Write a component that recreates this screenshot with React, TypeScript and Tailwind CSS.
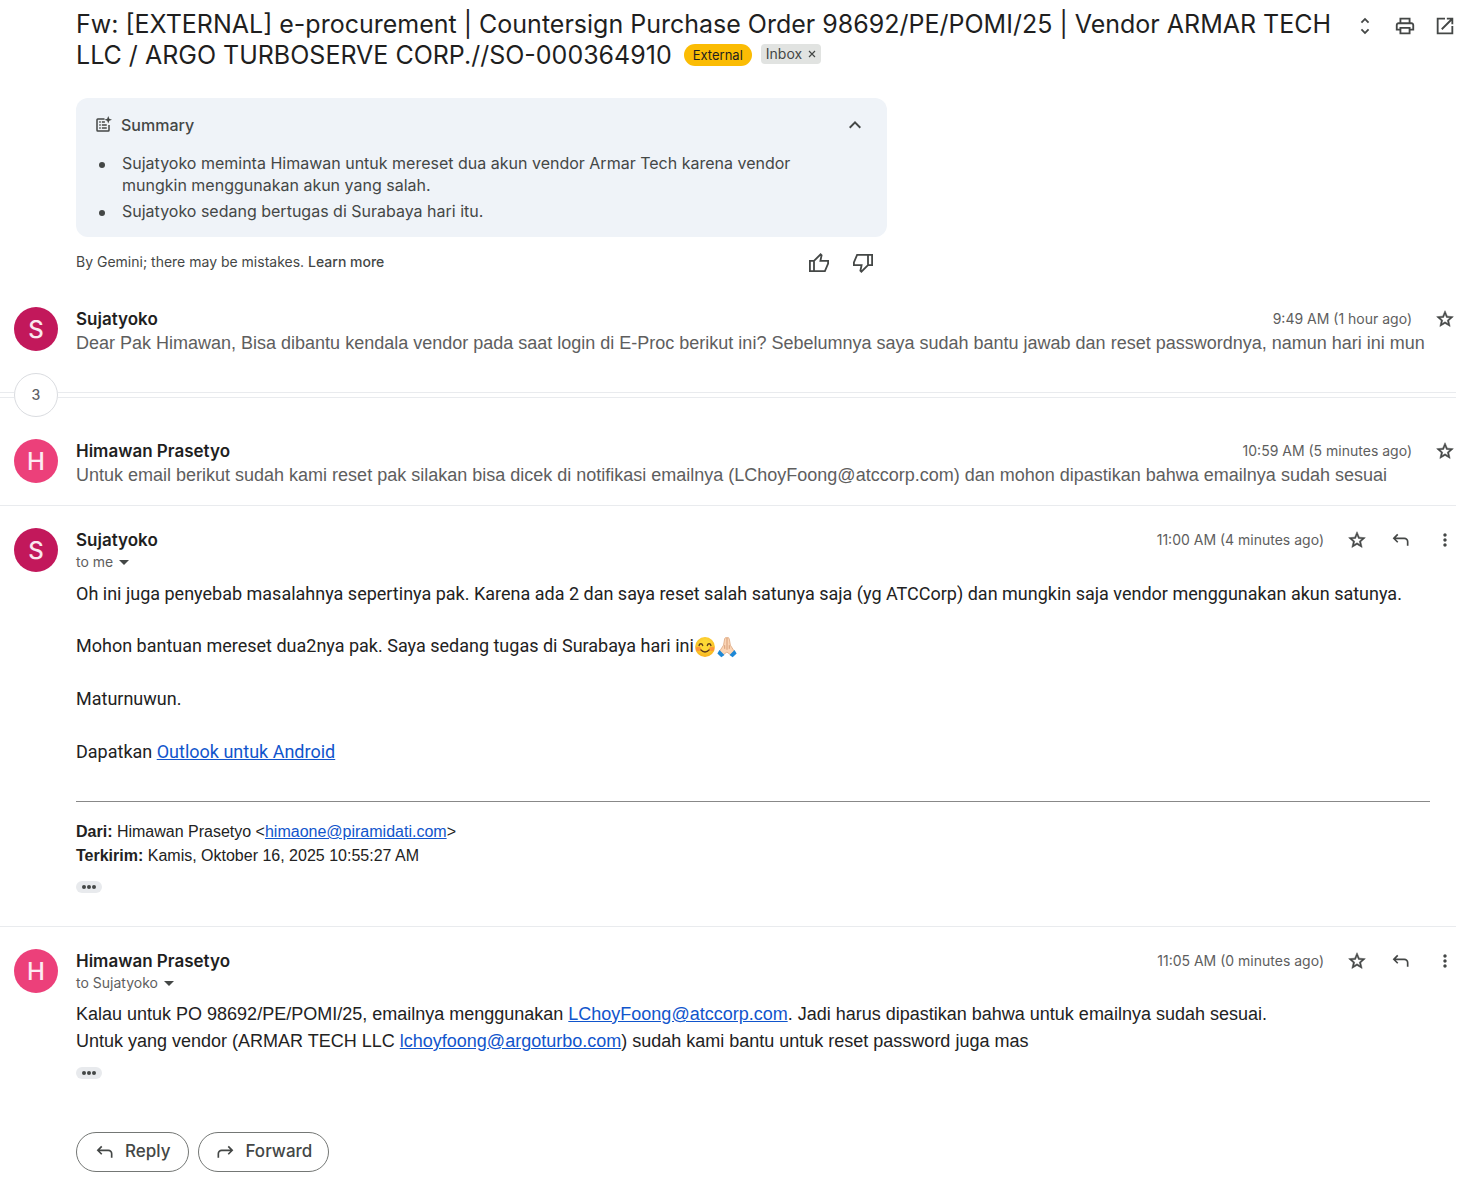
import type { ReactNode } from "react";

type IconProps = { d: string; className?: string };

function Icon({ d, className = "size-5" }: IconProps) {
  return (
    <svg viewBox="0 0 24 24" fill="currentColor" aria-hidden="true" className={"shrink-0 " + className}>
      <path d={d} />
    </svg>
  );
}

const paths = {
  unfold: "M12 5.83 15.17 9l1.41-1.41L12 3 7.41 7.59 8.83 9 12 5.83zm0 12.34L8.83 15l-1.41 1.41L12 21l4.59-4.59L15.17 15 12 18.17z",
  print:
    "M19 8h-1V3H6v5H5c-1.66 0-3 1.34-3 3v6h4v4h12v-4h4v-6c0-1.66-1.34-3-3-3zM8 5h8v3H8V5zm8 12v2H8v-4h8v2zm2-2v-2H6v2H4v-4c0-.55.45-1 1-1h14c.55 0 1 .45 1 1v4h-2z",
  openNew: "M19 19H5V5h7V3H3v18h18v-9h-2v7zM14 3v2h3.59l-9.83 9.83 1.41 1.41L19 6.41V10h2V3h-7z",
  up: "M12 8l-6 6 1.41 1.41L12 10.83l4.59 4.58L18 14z",
  star: "M22 9.24l-7.19-.62L12 2 9.19 8.63 2 9.24l5.46 4.73L5.82 21 12 17.27 18.18 21l-1.63-7.03L22 9.24zM12 15.4l-3.76 2.27 1-4.28-3.32-2.88 4.38-.38L12 6.1l1.71 4.04 4.38.38-3.32 2.88 1 4.28L12 15.4z",
  reply: "M7.4 4.6 8.8 6 5.8 9H16a5 5 0 0 1 5 5v5h-2v-5a3 3 0 0 0-3-3H5.8l3 3-1.4 1.4L2 10z",
  forward: "M16.6 4.6 15.2 6l3 3H8a5 5 0 0 0-5 5v5h2v-5a3 3 0 0 1 3-3h10.2l-3 3 1.4 1.4L22 10z",
  more: "M12 8c1.1 0 2-.9 2-2s-.9-2-2-2-2 .9-2 2 .9 2 2 2zm0 2c-1.1 0-2 .9-2 2s.9 2 2 2 2-.9 2-2-.9-2-2-2zm0 6c-1.1 0-2 .9-2 2s.9 2 2 2 2-.9 2-2-.9-2-2-2z",
  summary:
    "M5 3h9v2H5v14h14v-7h2v7a2 2 0 0 1-2 2H5a2 2 0 0 1-2-2V5a2 2 0 0 1 2-2zM7 7h2v2H7zM7 11h2v2H7zM7 15h2v2H7zM10.500 7h4v2h-4zM10.500 11h6.500v2h-6.500zM10.500 15h6.500v2h-6.500zM19 0l1.400 3.600L24 5l-3.600 1.400L19 10l-1.400-3.600L14 5l3.600-1.400z",
};

function ThumbIcon({ down = false }: { down?: boolean }) {
  return (
    <svg
      viewBox="0 0 24 24"
      fill="none"
      stroke="currentColor"
      strokeWidth="1.800"
      aria-hidden="true"
      className={down ? "size-6 rotate-180" : "size-6"}
    >
      <path d="M2.900 9.900H7v10.200H2.900zM7 9.900l6.600-6.600 1 1-1.200 5.600h7.700v2.600l-3.200 7.600H7" />
    </svg>
  );
}

function SmileEmoji() {
  return (
    <svg viewBox="0 0 24 24" role="img" aria-label="😊" className="inline-block size-[22px] align-[-6px]">
      <defs>
        <radialGradient id="face" cx="50%" cy="40%" r="60%">
          <stop offset="40%" stopColor="#fdd835" />
          <stop offset="100%" stopColor="#f9b41f" />
        </radialGradient>
      </defs>
      <circle cx="12" cy="12" r="10.800" fill="url(#face)" />
      <ellipse cx="4.800" cy="14" rx="3" ry="2.400" fill="#ff7043" opacity=".55" />
      <ellipse cx="19.200" cy="14" rx="3" ry="2.400" fill="#ff7043" opacity=".55" />
      <g fill="none" stroke="#5d3a1a" strokeWidth="1.500" strokeLinecap="round">
        <path d="M5.500 10.300c.7-2.400 3.300-2.400 4 0M14.500 10.300c.7-2.400 3.300-2.400 4 0M7.500 15.200c2.400 3 6.600 3 9 0" />
      </g>
    </svg>
  );
}

function PrayEmoji() {
  return (
    <svg viewBox="0 0 24 24" role="img" aria-label="🙏🏻" className="inline-block size-[22px] align-[-6px]">
      <path
        d="M11.900 2c-1.200-.8-2.300 0-2.500 1.300L8.200 10 4 16.500l3.600 4.300 4.300-3.300 4.300 3.300 3.600-4.300L15.700 10l-1.200-6.700C14.300 2 13.100 1.200 11.900 2z"
        fill="#fbd5b5"
        stroke="#d9a077"
        strokeWidth=".8"
      />
      <path d="M12 2v13M9.500 10v4M14.500 10v4" stroke="#c98b62" strokeWidth=".8" />
      <path d="M3.800 15.200 1.500 19l4.300 4.200 3.400-2.600zM20.200 15.200l2.300 3.800-4.300 4.200-3.400-2.600z" fill="#1e88d6" />
    </svg>
  );
}

function IconButton({ label, children }: { label: string; children: ReactNode }) {
  return (
    <button type="button" aria-label={label} className="flex h-6 w-[22px] shrink-0 items-center justify-center text-[#444746]">
      {children}
    </button>
  );
}

function Trimmed() {
  return (
    <button
      type="button"
      aria-label="Show trimmed content"
      className="flex h-3 w-[26px] items-center justify-center gap-px rounded-full bg-[#e8eaed]"
    >
      <i className="size-1 rounded-full bg-[#444746]" />
      <i className="size-1 rounded-full bg-[#444746]" />
      <i className="size-1 rounded-full bg-[#444746]" />
    </button>
  );
}

function MailLink({ children }: { children: ReactNode }) {
  return (
    <a href="#" className="text-[#1155cc] underline">
      {children}
    </a>
  );
}

type MessageProps = {
  name: string;
  initial: string;
  color: string;
  time: string;
  to?: string;
  snippet?: string;
  children?: ReactNode;
};

function Message({ name, initial, color, time, to, snippet, children }: MessageProps) {
  return (
    <article className="flex pt-[22px]">
      <div className="w-[76px] shrink-0 pl-3.5">
        <div className={"flex size-11 items-center justify-center rounded-full pt-0.5 text-2xl font-medium text-white/90 " + color}>
          {initial}
        </div>
      </div>
      <div className="min-w-0 flex-1">
        <header className="flex h-6 items-center">
          <h2 className="flex-1 text-[17px] leading-6 font-semibold text-[#1f1f1f]">{name}</h2>
          <time className="text-sm text-[#5e5e5e]">{time}</time>
          <div className="ml-[22px] flex gap-[22px]">
            <IconButton label="Star">
              <svg viewBox="0 0 24 24" fill="currentColor" stroke="currentColor" strokeWidth=".6" aria-hidden="true" className="size-5">
                <path d={paths.star} />
              </svg>
            </IconButton>
            {to && (
              <>
                <IconButton label="Reply">
                  <Icon d={paths.reply} />
                </IconButton>
                <IconButton label="More">
                  <Icon d={paths.more} />
                </IconButton>
              </>
            )}
          </div>
        </header>
        {to && (
          <button type="button" className="flex h-5 items-center gap-1.5 text-sm text-[#5e5e5e]">
            {to}
            <svg viewBox="0 0 10 5" aria-hidden="true" className="h-[5px] w-2.5 fill-[#444746]">
              <path d="M0 0h10L5 5z" />
            </svg>
          </button>
        )}
        {snippet && (
          <p className="overflow-hidden font-['Liberation_Sans',Arial,sans-serif] text-lg leading-6 whitespace-nowrap text-[#5e5e5e]">
            {snippet}
          </p>
        )}
        {children}
      </div>
    </article>
  );
}

export default function App() {
  return (
    <main className="bg-white pr-[13px] pb-2 font-[Inter,sans-serif] text-[#1f1f1f]">
      <header className="flex items-start pt-[9px] pl-[76px]">
        <h1 className="flex-1 text-[25px] leading-[31px]">
          Fw: [EXTERNAL] e-procurement | Countersign Purchase Order 98692/PE/POMI/25 | Vendor ARMAR TECH LLC / ARGO
          TURBOSERVE CORP.//SO-000364910
          <span className="ml-3 inline-flex h-[22px] items-center rounded-full bg-[#fbbc04] px-[9px] align-[4px] text-[13px] leading-5">
            External
          </span>
          <span className="ml-[9px] inline-flex h-5 items-center gap-1.5 rounded bg-[#e1e3e1] px-[5px] align-[5px] text-sm text-[#444746]">
            Inbox
            <button type="button" aria-label="Remove label Inbox">
              <svg viewBox="0 0 8 8" className="size-2 stroke-[#444746]" strokeWidth="1.200">
                <path d="M1 1l6 6M7 1L1 7" />
              </svg>
            </button>
          </span>
        </h1>
        <div className="flex gap-[18px] pt-[5px]">
          <IconButton label="Expand all">
            <Icon d={paths.unfold} className="h-6 w-[22px]" />
          </IconButton>
          <IconButton label="Print all">
            <Icon d={paths.print} className="size-[22px]" />
          </IconButton>
          <IconButton label="Open in new window">
            <Icon d={paths.openNew} className="size-[22px]" />
          </IconButton>
        </div>
      </header>

      <section className="mt-[27px] ml-[76px] max-w-[811px] text-[#444746]">
        <div className="rounded-xl bg-[#eff3f8] px-[18px] pt-4 pb-[15px]">
          <div className="flex h-[22px] items-center">
            <Icon d={paths.summary} className="size-[18px]" />
            <h2 className="ml-[9px] flex-1 text-base font-medium">Summary</h2>
            <button type="button" aria-label="Collapse summary" className="mr-0.5">
              <Icon d={paths.up} className="size-6" />
            </button>
          </div>
          <ul className="mt-4 space-y-1 pr-12 text-base leading-[22px]">
            <li className="flex">
              <i className="mt-2.5 mr-[17px] ml-[5px] size-1.5 shrink-0 rounded-full bg-[#444746]" />
              <span>
                Sujatyoko meminta Himawan untuk mereset dua akun vendor Armar Tech karena vendor mungkin menggunakan
                akun yang salah.
              </span>
            </li>
            <li className="flex">
              <i className="mt-2.5 mr-[17px] ml-[5px] size-1.5 shrink-0 rounded-full bg-[#444746]" />
              <span>Sujatyoko sedang bertugas di Surabaya hari itu.</span>
            </li>
          </ul>
        </div>
        <div className="mt-3.5 flex h-6 items-start pr-3">
          <p className="flex-1 text-sm leading-[22px]">
            By Gemini; there may be mistakes.{" "}
            <a href="#" className="font-medium">
              Learn more
            </a>
          </p>
          <div className="flex gap-5">
            <button type="button" aria-label="Good summary">
              <ThumbIcon />
            </button>
            <button type="button" aria-label="Bad summary">
              <ThumbIcon down />
            </button>
          </div>
        </div>
      </section>

      <div className="mt-2.5">
        <Message
          name="Sujatyoko"
          initial="S"
          color="bg-[#c2185b]"
          time="9:49 AM (1 hour ago)"
          snippet="Dear Pak Himawan, Bisa dibantu kendala vendor pada saat login di E-Proc berikut ini? Sebelumnya saya sudah bantu jawab dan reset passwordnya, namun hari ini mun"
        />
      </div>

      <div className="mt-[18px] flex items-center">
        <div className="h-1.5 w-3.5 border-y border-[#e9ebee]" />
        <button
          type="button"
          aria-label="Show 3 more messages"
          className="size-11 rounded-full border border-[#dadce0] text-sm font-medium text-[#5f6368]"
        >
          3
        </button>
        <div className="h-1.5 flex-1 border-y border-[#e9ebee]" />
      </div>

      <Message
        name="Himawan Prasetyo"
        initial="H"
        color="bg-[#ec407a]"
        time="10:59 AM (5 minutes ago)"
        snippet="Untuk email berikut sudah kami reset pak silakan bisa dicek di notifikasi emailnya (LChoyFoong@atccorp.com) dan mohon dipastikan bahwa emailnya sudah sesuai"
      />

      <div className="mt-[18px] border-t border-[#e9ebee]">
        <Message name="Sujatyoko" initial="S" color="bg-[#c2185b]" time="11:00 AM (4 minutes ago)" to="to me">
          <div className="mt-[9px] pr-[26px] font-[Roboto,sans-serif] text-lg leading-[26px] text-[#222222]">
            <p>
              Oh ini juga penyebab masalahnya sepertinya pak. Karena ada 2 dan saya reset salah satunya saja (yg
              ATCCorp) dan mungkin saja vendor menggunakan akun satunya.
            </p>
            <p className="mt-[26px] h-[27px]">
              Mohon bantuan mereset dua2nya pak. Saya sedang tugas di Surabaya hari ini
              <SmileEmoji />
              <PrayEmoji />
            </p>
            <p className="mt-[26px]">Maturnuwun.</p>
            <p className="mt-[27px]">
              Dapatkan <MailLink>Outlook untuk Android</MailLink>
            </p>
            <hr className="mt-9 border-[#888888]" />
          </div>
          <div className="mt-[18px] font-['Liberation_Sans',Arial,sans-serif] text-base text-[#222222]">
            <p>
              <b>Dari:</b> Himawan Prasetyo &lt;<MailLink>himaone@piramidati.com</MailLink>&gt;
            </p>
            <p>
              <b>Terkirim:</b> Kamis, Oktober 16, 2025 10:55:27 AM
            </p>
          </div>
          <div className="mt-[13px] mb-[33px]">
            <Trimmed />
          </div>
        </Message>
      </div>

      <div className="border-t border-[#e9ebee]">
        <Message name="Himawan Prasetyo" initial="H" color="bg-[#ec407a]" time="11:05 AM (0 minutes ago)" to="to Sujatyoko">
          <div className="mt-2 mb-3 font-['Liberation_Sans',Arial,sans-serif] text-lg leading-[27px] text-[#222222]">
            <p>
              Kalau untuk PO 98692/PE/POMI/25, emailnya menggunakan <MailLink>LChoyFoong@atccorp.com</MailLink>. Jadi
              harus dipastikan bahwa untuk emailnya sudah sesuai.
            </p>
            <p>
              Untuk yang vendor (ARMAR TECH LLC <MailLink>lchoyfoong@argoturbo.com</MailLink>) sudah kami bantu untuk
              reset password juga mas
            </p>
          </div>
          <Trimmed />
          <div className="mt-[53px] flex gap-[9px] text-[17px] font-medium text-[#444746]">
            <button type="button" className="flex h-10 items-center gap-2.5 rounded-full border border-[#747775] px-[18px]">
              <Icon d={paths.reply} />
              Reply
            </button>
            <button type="button" className="flex h-10 items-center gap-2.5 rounded-full border border-[#747775] px-4">
              <Icon d={paths.forward} />
              Forward
            </button>
          </div>
        </Message>
      </div>
    </main>
  );
}
